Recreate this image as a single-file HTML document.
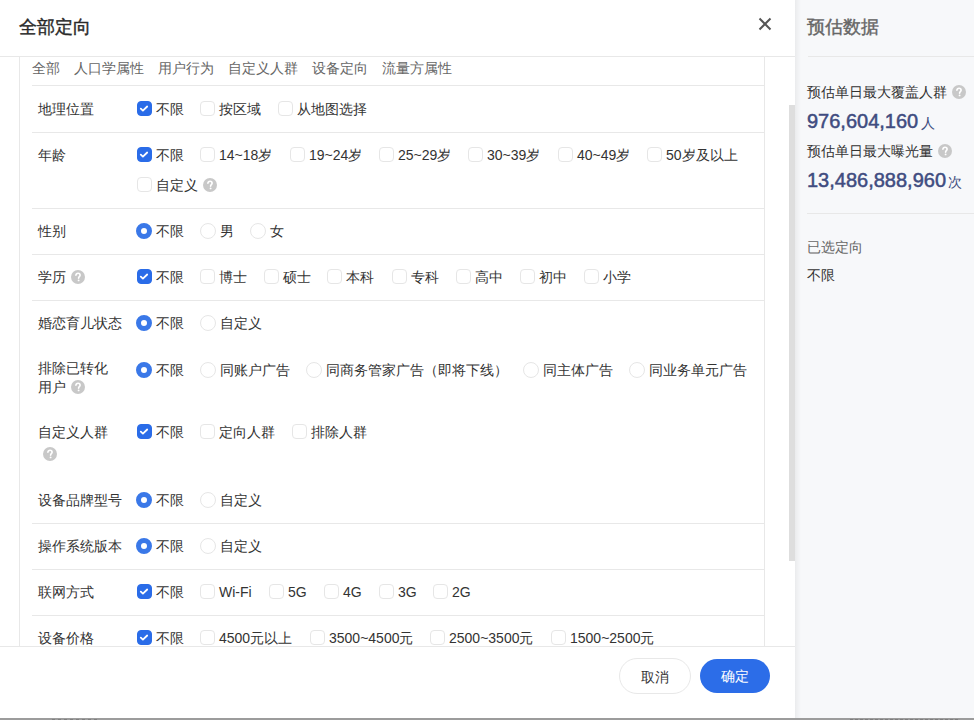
<!DOCTYPE html>
<html><head><meta charset="utf-8">
<style>
*{box-sizing:border-box;margin:0;padding:0}
html,body{width:974px;height:720px;overflow:hidden;background:#fff}
body{position:relative;font-family:"Liberation Sans",sans-serif;color:#333;font-size:14px}
.a{position:absolute;white-space:nowrap}
.t{font-size:14px;line-height:20px;height:20px}
.hl{position:absolute;height:1px;background:#e8e8e8}
.vl{position:absolute;width:1px;background:#e8e8e8}
.cb{position:absolute;width:15px;height:15px;border:1px solid #e6e6e6;border-radius:4px;background:#fff}
.cb.on{background:#2a6ce8;border-color:#2a6ce8}
.cb.on svg{position:absolute;left:-1px;top:-1px}
.rd{position:absolute;width:16px;height:16px;border:1px solid #e6e6e6;border-radius:50%;background:#fff}
.rd.on{border:5px solid #3a78e8}
.help{position:absolute;width:14px;height:14px;border-radius:50%;background:#c8c8c8}
.help svg{position:absolute;left:0;top:0}
</style></head><body>

<!-- header -->
<div class="a" style="left:19px;top:15px;font-size:18px;line-height:24px;-webkit-text-stroke:0.4px #2a2a2a;color:#2a2a2a">全部定向</div>
<svg class="a" style="left:758px;top:17px" width="14" height="14" viewBox="0 0 14 14"><path d="M1.5 1.5L12.5 12.5M12.5 1.5L1.5 12.5" stroke="#555" stroke-width="2" fill="none"/></svg>
<div class="hl" style="left:0;top:56px;width:795px"></div>

<!-- content box borders -->
<div class="vl" style="left:19px;top:57px;height:589px"></div>
<div class="vl" style="left:764px;top:57px;height:589px"></div>

<!-- tabs -->
<div class="a t" style="left:32px;top:58px;color:#666">全部</div>
<div class="a t" style="left:74px;top:58px;color:#666">人口学属性</div>
<div class="a t" style="left:158px;top:58px;color:#666">用户行为</div>
<div class="a t" style="left:228px;top:58px;color:#666">自定义人群</div>
<div class="a t" style="left:312px;top:58px;color:#666">设备定向</div>
<div class="a t" style="left:382px;top:58px;color:#666">流量方属性</div>
<div class="hl" style="left:32px;top:85px;width:732px"></div>

<div id="rows"><div class="a" style="left:0;top:86px;width:795px;height:560px;overflow:hidden"><div class="a" style="left:0;top:-86px;width:795px;height:720px"><div class="a t" style="left:38px;top:99px">地理位置</div>
<div class="cb on" style="left:137px;top:101px"><svg width="15" height="15" viewBox="0 0 15 15"><path d="M3.8 7.7L5.9 9.6L10.2 5.5" stroke="#fff" stroke-width="1.8" fill="none" stroke-linecap="round" stroke-linejoin="round"/></svg></div>
<div class="a t" style="left:156px;top:98.5px">不限</div>
<div class="cb" style="left:200px;top:101px"></div>
<div class="a t" style="left:219px;top:98.5px">按区域</div>
<div class="cb" style="left:278px;top:101px"></div>
<div class="a t" style="left:297px;top:98.5px">从地图选择</div>
<div class="a t" style="left:38px;top:145px">年龄</div>
<div class="cb on" style="left:137px;top:147px"><svg width="15" height="15" viewBox="0 0 15 15"><path d="M3.8 7.7L5.9 9.6L10.2 5.5" stroke="#fff" stroke-width="1.8" fill="none" stroke-linecap="round" stroke-linejoin="round"/></svg></div>
<div class="a t" style="left:156px;top:145px">不限</div>
<div class="cb" style="left:200px;top:147px"></div>
<div class="a t" style="left:219px;top:145px">14~18岁</div>
<div class="cb" style="left:290px;top:147px"></div>
<div class="a t" style="left:309px;top:145px">19~24岁</div>
<div class="cb" style="left:379px;top:147px"></div>
<div class="a t" style="left:398px;top:145px">25~29岁</div>
<div class="cb" style="left:468px;top:147px"></div>
<div class="a t" style="left:487px;top:145px">30~39岁</div>
<div class="cb" style="left:558px;top:147px"></div>
<div class="a t" style="left:577px;top:145px">40~49岁</div>
<div class="cb" style="left:647px;top:147px"></div>
<div class="a t" style="left:666px;top:145px">50岁及以上</div>
<div class="a t" style="left:38px;top:221px">性别</div>
<div class="rd on" style="left:136px;top:223px"></div>
<div class="a t" style="left:156px;top:221px">不限</div>
<div class="rd" style="left:200px;top:223px"></div>
<div class="a t" style="left:220px;top:221px">男</div>
<div class="rd" style="left:250px;top:223px"></div>
<div class="a t" style="left:270px;top:221px">女</div>
<div class="a t" style="left:38px;top:267px">学历</div>
<div class="cb on" style="left:137px;top:269px"><svg width="15" height="15" viewBox="0 0 15 15"><path d="M3.8 7.7L5.9 9.6L10.2 5.5" stroke="#fff" stroke-width="1.8" fill="none" stroke-linecap="round" stroke-linejoin="round"/></svg></div>
<div class="a t" style="left:156px;top:267px">不限</div>
<div class="cb" style="left:200px;top:269px"></div>
<div class="a t" style="left:219px;top:267px">博士</div>
<div class="cb" style="left:264px;top:269px"></div>
<div class="a t" style="left:283px;top:267px">硕士</div>
<div class="cb" style="left:327px;top:269px"></div>
<div class="a t" style="left:346px;top:267px">本科</div>
<div class="cb" style="left:392px;top:269px"></div>
<div class="a t" style="left:411px;top:267px">专科</div>
<div class="cb" style="left:456px;top:269px"></div>
<div class="a t" style="left:475px;top:267px">高中</div>
<div class="cb" style="left:520px;top:269px"></div>
<div class="a t" style="left:539px;top:267px">初中</div>
<div class="cb" style="left:584px;top:269px"></div>
<div class="a t" style="left:603px;top:267px">小学</div>
<div class="a t" style="left:38px;top:313px">婚恋育儿状态</div>
<div class="rd on" style="left:136px;top:315px"></div>
<div class="a t" style="left:156px;top:313px">不限</div>
<div class="rd" style="left:200px;top:315px"></div>
<div class="a t" style="left:220px;top:313px">自定义</div>
<div class="a t" style="left:38px;top:358px">排除已转化</div>
<div class="a t" style="left:38px;top:376.5px">用户</div>
<div class="rd on" style="left:136px;top:362px"></div>
<div class="a t" style="left:156px;top:360px">不限</div>
<div class="rd" style="left:200px;top:362px"></div>
<div class="a t" style="left:220px;top:360px">同账户广告</div>
<div class="rd" style="left:306px;top:362px"></div>
<div class="a t" style="left:326px;top:360px">同商务管家广告（即将下线）</div>
<div class="rd" style="left:523px;top:362px"></div>
<div class="a t" style="left:543px;top:360px">同主体广告</div>
<div class="rd" style="left:629px;top:362px"></div>
<div class="a t" style="left:649px;top:360px">同业务单元广告</div>
<div class="a t" style="left:38px;top:421.5px">自定义人群</div>
<div class="cb on" style="left:137px;top:424px"><svg width="15" height="15" viewBox="0 0 15 15"><path d="M3.8 7.7L5.9 9.6L10.2 5.5" stroke="#fff" stroke-width="1.8" fill="none" stroke-linecap="round" stroke-linejoin="round"/></svg></div>
<div class="a t" style="left:156px;top:421.5px">不限</div>
<div class="cb" style="left:200px;top:424px"></div>
<div class="a t" style="left:219px;top:421.5px">定向人群</div>
<div class="cb" style="left:292px;top:424px"></div>
<div class="a t" style="left:311px;top:421.5px">排除人群</div>
<div class="a t" style="left:38px;top:490px">设备品牌型号</div>
<div class="rd on" style="left:136px;top:492px"></div>
<div class="a t" style="left:156px;top:490px">不限</div>
<div class="rd" style="left:200px;top:492px"></div>
<div class="a t" style="left:220px;top:490px">自定义</div>
<div class="a t" style="left:38px;top:536px">操作系统版本</div>
<div class="rd on" style="left:136px;top:538px"></div>
<div class="a t" style="left:156px;top:536px">不限</div>
<div class="rd" style="left:200px;top:538px"></div>
<div class="a t" style="left:220px;top:536px">自定义</div>
<div class="a t" style="left:38px;top:582px">联网方式</div>
<div class="cb on" style="left:137px;top:584px"><svg width="15" height="15" viewBox="0 0 15 15"><path d="M3.8 7.7L5.9 9.6L10.2 5.5" stroke="#fff" stroke-width="1.8" fill="none" stroke-linecap="round" stroke-linejoin="round"/></svg></div>
<div class="a t" style="left:156px;top:582px">不限</div>
<div class="cb" style="left:200px;top:584px"></div>
<div class="a t" style="left:219px;top:582px">Wi-Fi</div>
<div class="cb" style="left:269px;top:584px"></div>
<div class="a t" style="left:288px;top:582px">5G</div>
<div class="cb" style="left:324px;top:584px"></div>
<div class="a t" style="left:343px;top:582px">4G</div>
<div class="cb" style="left:379px;top:584px"></div>
<div class="a t" style="left:398px;top:582px">3G</div>
<div class="cb" style="left:433px;top:584px"></div>
<div class="a t" style="left:452px;top:582px">2G</div>
<div class="a t" style="left:38px;top:627.5px">设备价格</div>
<div class="cb on" style="left:137px;top:630px"><svg width="15" height="15" viewBox="0 0 15 15"><path d="M3.8 7.7L5.9 9.6L10.2 5.5" stroke="#fff" stroke-width="1.8" fill="none" stroke-linecap="round" stroke-linejoin="round"/></svg></div>
<div class="a t" style="left:156px;top:627.5px">不限</div>
<div class="cb" style="left:200px;top:630px"></div>
<div class="a t" style="left:219px;top:627.5px">4500元以上</div>
<div class="cb" style="left:310px;top:630px"></div>
<div class="a t" style="left:329px;top:627.5px">3500~4500元</div>
<div class="cb" style="left:430px;top:630px"></div>
<div class="a t" style="left:449px;top:627.5px">2500~3500元</div>
<div class="cb" style="left:551px;top:630px"></div>
<div class="a t" style="left:570px;top:627.5px">1500~2500元</div>
<div class="cb" style="left:137px;top:177px"></div>
<div class="a t" style="left:156px;top:175px">自定义</div>
<div class="help" style="left:203px;top:178px"><svg width="14" height="14" viewBox="0 0 14 14"><path d="M4.9 5.3C4.9 4.1 5.8 3.3 7 3.3S9.1 4.1 9.1 5.2C9.1 6.5 7.6 6.7 7.6 7.9V8.3" stroke="#fff" stroke-width="1.6" fill="none" stroke-linecap="round"/><circle cx="7.6" cy="10.4" r="0.95" fill="#fff"/></svg></div>
<div class="help" style="left:71px;top:270px"><svg width="14" height="14" viewBox="0 0 14 14"><path d="M4.9 5.3C4.9 4.1 5.8 3.3 7 3.3S9.1 4.1 9.1 5.2C9.1 6.5 7.6 6.7 7.6 7.9V8.3" stroke="#fff" stroke-width="1.6" fill="none" stroke-linecap="round"/><circle cx="7.6" cy="10.4" r="0.95" fill="#fff"/></svg></div>
<div class="help" style="left:71px;top:379.5px"><svg width="14" height="14" viewBox="0 0 14 14"><path d="M4.9 5.3C4.9 4.1 5.8 3.3 7 3.3S9.1 4.1 9.1 5.2C9.1 6.5 7.6 6.7 7.6 7.9V8.3" stroke="#fff" stroke-width="1.6" fill="none" stroke-linecap="round"/><circle cx="7.6" cy="10.4" r="0.95" fill="#fff"/></svg></div>
<div class="help" style="left:43px;top:446.5px"><svg width="14" height="14" viewBox="0 0 14 14"><path d="M4.9 5.3C4.9 4.1 5.8 3.3 7 3.3S9.1 4.1 9.1 5.2C9.1 6.5 7.6 6.7 7.6 7.9V8.3" stroke="#fff" stroke-width="1.6" fill="none" stroke-linecap="round"/><circle cx="7.6" cy="10.4" r="0.95" fill="#fff"/></svg></div>
<div class="hl" style="left:32px;top:132px;width:732px"></div>
<div class="hl" style="left:32px;top:208px;width:732px"></div>
<div class="hl" style="left:32px;top:254px;width:732px"></div>
<div class="hl" style="left:32px;top:300px;width:732px"></div>
<div class="hl" style="left:32px;top:523px;width:732px"></div>
<div class="hl" style="left:32px;top:569px;width:732px"></div>
<div class="hl" style="left:32px;top:615px;width:732px"></div></div></div></div><!--/rows-->

<!-- scrollbar -->
<div class="a" style="left:789px;top:105px;width:6px;height:456px;background:#dedede"></div>

<!-- footer -->
<div class="hl" style="left:0;top:646px;width:795px"></div>
<div class="a" style="left:619px;top:658px;width:72px;height:36px;border:1px solid #e8e8e8;border-radius:18px;text-align:center;line-height:36px;font-size:14px;color:#333">取消</div>
<div class="a" style="left:700px;top:659px;width:70px;height:34px;background:#2c6de8;border-radius:17px;text-align:center;line-height:35px;font-size:14px;color:#fff">确定</div>

<!-- right panel -->
<div class="a" style="left:795px;top:0;width:179px;height:718px;background:#f7f8fa"></div>
<div class="a" style="left:795px;top:0;width:6px;height:718px;background:linear-gradient(to right,rgba(0,0,0,0.05),rgba(0,0,0,0))"></div>
<div class="a" style="left:807px;top:15px;font-size:18px;line-height:24px;-webkit-text-stroke:0.4px #666;color:#666">预估数据</div>
<div class="hl" style="left:808px;top:56px;width:166px"></div>
<div class="a t" style="left:807px;top:82px">预估单日最大覆盖人群</div>
<div class="help" style="left:952px;top:85px"><svg width="14" height="14" viewBox="0 0 14 14"><path d="M4.9 5.3C4.9 4.1 5.8 3.3 7 3.3S9.1 4.1 9.1 5.2C9.1 6.5 7.6 6.7 7.6 7.9V8.3" stroke="#fff" stroke-width="1.6" fill="none" stroke-linecap="round"/><circle cx="7.6" cy="10.4" r="0.95" fill="#fff"/></svg></div>
<div class="a" style="left:807px;top:109px;line-height:24px;color:#404c80"><span style="font-size:20px;-webkit-text-stroke:0.5px #404c80">976,604,160</span><span style="font-size:14px;margin-left:3px">人</span></div>
<div class="a t" style="left:807px;top:141px">预估单日最大曝光量</div>
<div class="help" style="left:938px;top:144px"><svg width="14" height="14" viewBox="0 0 14 14"><path d="M4.9 5.3C4.9 4.1 5.8 3.3 7 3.3S9.1 4.1 9.1 5.2C9.1 6.5 7.6 6.7 7.6 7.9V8.3" stroke="#fff" stroke-width="1.6" fill="none" stroke-linecap="round"/><circle cx="7.6" cy="10.4" r="0.95" fill="#fff"/></svg></div>
<div class="a" style="left:807px;top:168px;line-height:24px;color:#404c80"><span style="font-size:20px;-webkit-text-stroke:0.5px #404c80">13,486,888,960</span><span style="font-size:14px;margin-left:2px">次</span></div>
<div class="hl" style="left:807px;top:213px;width:167px"></div>
<div class="a t" style="left:807px;top:237px;color:#666">已选定向</div>
<div class="a t" style="left:807px;top:265px">不限</div>

<!-- bottom strip -->
<div class="a" style="left:0;top:718px;width:974px;height:2px;background:#9c9c9c"></div>
<div class="a" style="left:52px;top:719px;width:48px;height:1px;background:repeating-linear-gradient(to right,#808080 0 3px,#9c9c9c 3px 6px)"></div>
<div class="a" style="left:850px;top:719px;width:110px;height:1px;background:repeating-linear-gradient(to right,#7e7e7e 0 3px,#9a9a9a 3px 5px)"></div>
</body></html>
